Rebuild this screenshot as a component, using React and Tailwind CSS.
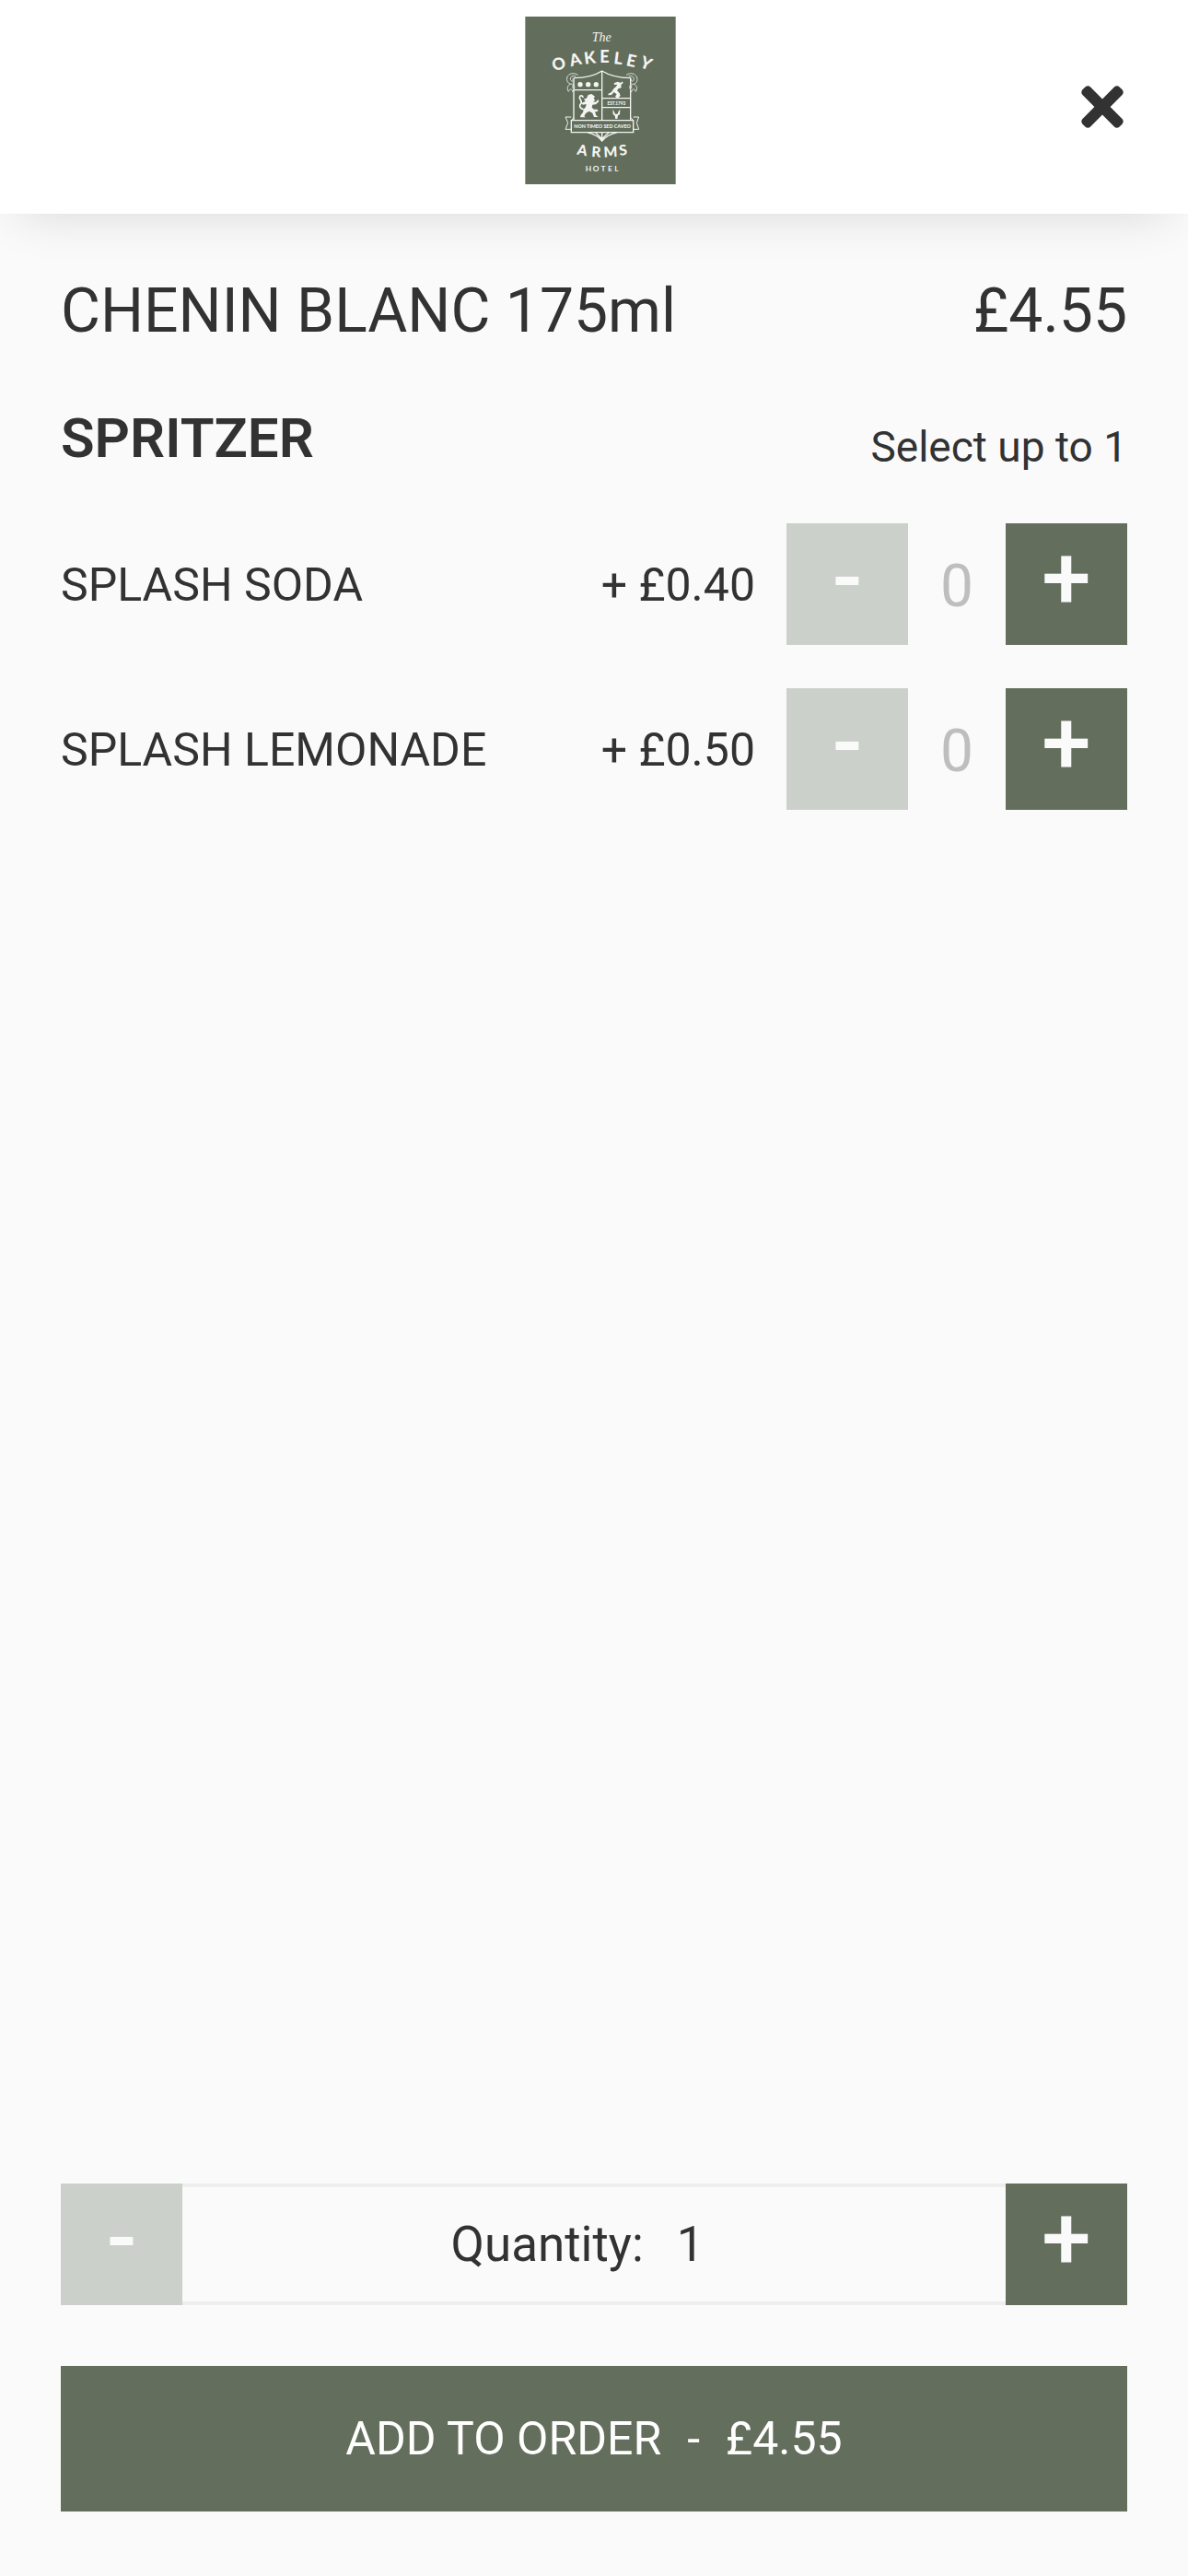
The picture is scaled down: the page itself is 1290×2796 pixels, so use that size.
import { useState } from "react";
import { FaTimes } from "react-icons/fa";

const BASE_PRICE = 4.55;

const EXTRAS = [
  { id: "soda", name: "SPLASH SODA", price: 0.4 },
  { id: "lemonade", name: "SPLASH LEMONADE", price: 0.5 },
];

const MAX_EXTRAS = 1;

const formatPrice = (value) => `£${value.toFixed(2)}`;

// letters of the crest, each set on its own spot of the curve
const TOP_LETTERS = [
  { char: "O", x: 142, y: 178, angle: -20 },
  { char: "A", x: 196, y: 164, angle: -14 },
  { char: "K", x: 243, y: 158, angle: -7 },
  { char: "E", x: 291, y: 156, angle: 0 },
  { char: "L", x: 336, y: 160, angle: 7 },
  { char: "E", x: 379, y: 168, angle: 12 },
  { char: "Y", x: 427, y: 176, angle: 22 },
];

const BOTTOM_LETTERS = [
  { char: "A", x: 219, y: 460, angle: 10 },
  { char: "R", x: 264, y: 465, angle: 4 },
  { char: "M", x: 311, y: 465, angle: -3 },
  { char: "S", x: 352, y: 459, angle: -8 },
];

const HOTEL_LETTERS = [
  { char: "H", x: 239 },
  { char: "O", x: 263 },
  { char: "T", x: 287 },
  { char: "E", x: 309 },
  { char: "L", x: 330 },
];

function Logo() {
  return (
    <svg
      viewBox="33 24 490 546"
      className="w-[164px] h-[182px]"
      role="img"
      aria-label="The Oakeley Arms Hotel"
    >
      <rect x="33" y="24" width="490" height="546" fill="#626d5b" />

      <g fill="#f4f5f2" textAnchor="middle" fontFamily="Lato, sans-serif">
        <text
          x="282"
          y="105"
          fontFamily="'Liberation Serif', serif"
          fontStyle="italic"
          fontSize="42"
        >
          The
        </text>
        {TOP_LETTERS.map((l, i) => (
          <text
            key={i}
            x={l.x}
            y={l.y + 19}
            fontSize="54"
            fontWeight="900"
            transform={`rotate(${l.angle} ${l.x} ${l.y})`}
          >
            {l.char}
          </text>
        ))}
        {BOTTOM_LETTERS.map((l, i) => (
          <text
            key={i}
            x={l.x}
            y={l.y + 16}
            fontSize="47"
            fontWeight="900"
            transform={`rotate(${l.angle} ${l.x} ${l.y})`}
          >
            {l.char}
          </text>
        ))}
        {HOTEL_LETTERS.map((l, i) => (
          <text key={i} x={l.x} y="528" fontSize="25" fontWeight="700">
            {l.char}
          </text>
        ))}
      </g>

      {/* shield */}
      <g fill="none" stroke="#f4f5f2" strokeWidth="4">
        <path d="M191 224Q250 223 283 201Q318 223 376 224V360M191 224V360" />
        <path d="M283 201V362M191 263H283M283 290H376M283 320H376" />
        <path d="M236 401Q270 410 283 429Q298 410 332 401M283 401V428M262 402L283 422L305 402" />
        <path d="M183 362H385V401H183Z" />
        <path d="M183 351H164L172 370L164 391H183M385 351H403L396 370L403 391H385" strokeWidth="3" />
        <path d="M183 362L192 352M385 362L376 352" strokeWidth="3" />
      </g>

      {/* mantling */}
      <g fill="none" stroke="#dfe3dc" strokeWidth="3" strokeLinecap="round">
        <path d="M204 214C190 204 174 210 169 222C167 234 172 240 180 244C170 248 168 258 174 268C178 258 186 258 188 270C194 260 196 250 189 242" />
        <path d="M196 218C184 214 176 224 182 232C188 238 190 232 188 228M180 244C184 240 190 246 188 256" />
        <path d="M363 214C377 204 391 210 397 222C400 234 395 240 387 244C397 248 399 258 393 268C389 258 381 258 379 270C373 260 371 250 378 242" />
        <path d="M371 218C383 214 391 224 385 232C379 238 377 232 379 228M387 244C383 240 377 246 379 256" />
      </g>

      <g fill="#f4f5f2">
        <circle cx="212" cy="245" r="8" />
        <circle cx="238" cy="245" r="8" />
        <circle cx="264" cy="245" r="8" />
        {/* lion */}
        <path d="M238 279L249 276L260 284L256 290L261 296L254 301L262 302L271 294L273 301L263 310L252 311L250 320L257 326L268 326L270 333L260 334L264 346L271 351H257L252 338L241 332L231 338L225 347L229 352H212L214 344L221 336L224 325L230 318L232 309L221 311L215 306L229 300L224 292L232 291Z" />
        {/* arm with hammer */}
        <path d="M322 241L334 236L344 240L349 235L352 240L345 246L346 256L337 258L332 265L340 273L343 282L334 290L326 284L331 277L322 270L314 279L303 280L304 275L314 270L321 259L329 252L333 245L323 246Z" />
        {/* stag */}
        <path d="M318 326L322 332L326 341H334L337 332L342 326L341 343L335 346L333 357H327L325 347L319 342Z" />
      </g>
      <path
        d="M222 326C210 322 208 314 214 308C220 300 212 296 210 288C210 280 219 280 221 286"
        fill="none"
        stroke="#f4f5f2"
        strokeWidth="5"
        strokeLinecap="round"
      />

      <g fill="#f4f5f2" textAnchor="middle" fontFamily="Lato, sans-serif" fontWeight="900">
        <text x="330" y="311" fontSize="14">EST.1793</text>
        <text x="284" y="387" fontSize="16">NON TIMEO SED CAVEO</text>
      </g>
    </svg>
  );
}

function StepButton({ label, symbol, disabled, onClick }) {
  return (
    <button
      type="button"
      aria-label={label}
      disabled={disabled}
      onClick={onClick}
      className="flex size-[132px] shrink-0 justify-center bg-[#636e5c] text-[96px] leading-[118px] font-medium text-[#fafafa] disabled:bg-[#ccd0ca]"
    >
      {symbol}
    </button>
  );
}

export default function App() {
  const [extras, setExtras] = useState({ soda: 0, lemonade: 0 });
  const [quantity, setQuantity] = useState(1);

  const picked = Object.values(extras).reduce((sum, n) => sum + n, 0);
  const extrasPrice = EXTRAS.reduce((sum, e) => sum + e.price * extras[e.id], 0);
  const total = (BASE_PRICE + extrasPrice) * quantity;

  const changeExtra = (id, step) => {
    if (step > 0 && picked >= MAX_EXTRAS) return;
    setExtras({ ...extras, [id]: extras[id] + step });
  };

  return (
    <div className="flex min-h-screen flex-col bg-[#fafafa] font-[Roboto,sans-serif] text-[#323232]">
      <header className="flex items-start justify-between bg-white px-[70px] pt-[18px] pb-8 shadow-[0_20px_50px_-20px_rgba(0,0,0,0.14)]">
        <div className="w-[60px]" />
        <Logo />
        <button type="button" aria-label="Close" className="flex self-center pt-3.5">
          <FaTimes className="h-[66px] w-[46px]" />
        </button>
      </header>

      <main className="flex flex-1 flex-col px-[66px] pt-[66px]">
        <div className="flex items-baseline justify-between text-[66px] leading-[80px]">
          <h1>CHENIN BLANC 175ml</h1>
          <span>{formatPrice(BASE_PRICE)}</span>
        </div>

        <div className="mt-[63px] flex items-start justify-between">
          <h2 className="text-[60px] leading-[70px] font-semibold">SPRITZER</h2>
          <span className="pt-3.5 text-[46px] leading-[60px]">Select up to {MAX_EXTRAS}</span>
        </div>

        {/* extras */}
        <ul className="mt-[53px] flex flex-col gap-[47px]">
          {EXTRAS.map((e) => (
            <li key={e.id} className="flex items-center text-[50px] leading-[60px]">
              <span className="flex-1 pt-0.5">{e.name}</span>
              <span className="mr-[34px] pt-0.5">+ {formatPrice(e.price)}</span>
              <StepButton
                label={`Remove ${e.name}`}
                symbol="-"
                disabled={extras[e.id] === 0}
                onClick={() => changeExtra(e.id, -1)}
              />
              <span className="w-[106px] pt-1.5 text-center text-[64px] text-[#bebebe]">
                {extras[e.id]}
              </span>
              <StepButton
                label={`Add ${e.name}`}
                symbol="+"
                onClick={() => changeExtra(e.id, 1)}
              />
            </li>
          ))}
        </ul>
      </main>

      <footer className="flex flex-col gap-[66px] px-[66px] pb-[70px]">
        <div className="flex">
          <StepButton
            label="Decrease quantity"
            symbol="-"
            disabled={quantity === 1}
            onClick={() => setQuantity(quantity - 1)}
          />
          <div className="flex flex-1 items-center justify-center gap-9 border-y-4 border-[#eeeeee] pr-9 text-[53px] leading-[64px]">
            <span>Quantity:</span>
            <span>{quantity}</span>
          </div>
          <StepButton
            label="Increase quantity"
            symbol="+"
            onClick={() => setQuantity(quantity + 1)}
          />
        </div>

        <button
          type="button"
          className="flex h-[158px] items-center justify-center gap-7 bg-[#636e5c] text-[50px] text-white"
        >
          <span>ADD TO ORDER</span>
          <span>-</span>
          <span>{formatPrice(total)}</span>
        </button>
      </footer>
    </div>
  );
}
